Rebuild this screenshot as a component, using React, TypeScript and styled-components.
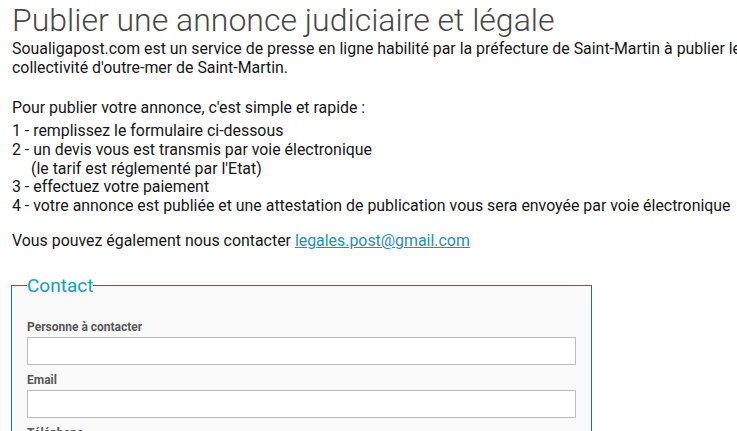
import React from "react";
import styled, { createGlobalStyle } from "styled-components";

const GlobalStyle = createGlobalStyle`
  html, body {
    margin: 0;
    padding: 0;
    background: #ffffff;
    overflow: hidden;
  }
  body {
    font-family: Roboto, "Liberation Sans", Arial, sans-serif;
    color: #161616;
  }
`;

const Page = styled.div`
  width: 1300px;
  padding: 0 12px;
`;

const Title = styled.h1`
  margin: 2px 0 0;
  font-size: 32px;
  font-weight: 300;
  line-height: 37px;
  color: #484848;
`;

const Paragraph = styled.p<{ $top?: number; $bottom?: number }>`
  margin: ${(p) => p.$top ?? 0}px 0 ${(p) => p.$bottom ?? 0}px;
  font-size: 15.9px;
  line-height: 19px;
`;

const Steps = styled.div`
  font-size: 15.9px;
  line-height: 18.8px;
  margin-top: 5px;
`;

const Step = styled.div<{ $indent?: boolean }>`
  padding-left: ${(p) => (p.$indent ? "19px" : "0")};
`;

const MailLink = styled.a`
  color: #1a93b0;
  text-decoration: underline;
`;

const Fieldset = styled.fieldset`
  width: 549px;
  margin: 26px 0 0 -1px;
  padding: 23px 15px 0;
  border: 1px solid #137b8f;
  background: #fafafa;
`;

const Legend = styled.legend`
  padding: 0;
  font-size: 19px;
  font-weight: 400;
  color: #1a9cb6;
  line-height: 20px;
`;

const Field = styled.div`
  display: flex;
  flex-direction: column;
  gap: 2px;
  margin-bottom: 7px;
`;

const Label = styled.label`
  font-size: 12px;
  font-weight: 700;
  color: #575757;
  line-height: 16px;
`;

const Input = styled.input`
  box-sizing: border-box;
  width: 100%;
  height: 28px;
  border: 1px solid #bdbdbd;
  background: #ffffff;
  font-family: inherit;
  font-size: 13px;
  padding: 0 6px;
`;

const steps = [
  { text: "1 - remplissez le formulaire ci-dessous" },
  { text: "2 - un devis vous est transmis par voie électronique" },
  { text: "(le tarif est réglementé par l'Etat)", indent: true },
  { text: "3 - effectuez votre paiement" },
  { text: "4 - votre annonce est publiée et une attestation de publication vous sera envoyée par voie électronique" },
];

const fields = ["Personne à contacter", "Email", "Téléphone"];

export default function App() {
  return (
    <>
      <GlobalStyle />
      <Page>
        <Title>Publier une annonce judiciaire et légale</Title>
        <Paragraph $bottom={21}>
          Soualigapost.com est un service de presse en ligne habilité par la préfecture de Saint-Martin à publier les
          annonces judiciaires et légales dans la
          <br />
          collectivité d'outre-mer de Saint-Martin.
        </Paragraph>
        <Paragraph>Pour publier votre annonce, c'est simple et rapide :</Paragraph>
        <Steps>
          {steps.map((s) => (
            <Step key={s.text} $indent={s.indent}>
              {s.text}
            </Step>
          ))}
        </Steps>
        <Paragraph $top={15}>
          Vous pouvez également nous contacter <MailLink href="#">legales.post@gmail.com</MailLink>
        </Paragraph>
        <Fieldset>
          <Legend>Contact</Legend>
          {fields.map((f) => (
            <Field key={f}>
              <Label>{f}</Label>
              <Input type="text" />
            </Field>
          ))}
        </Fieldset>
      </Page>
    </>
  );
}
